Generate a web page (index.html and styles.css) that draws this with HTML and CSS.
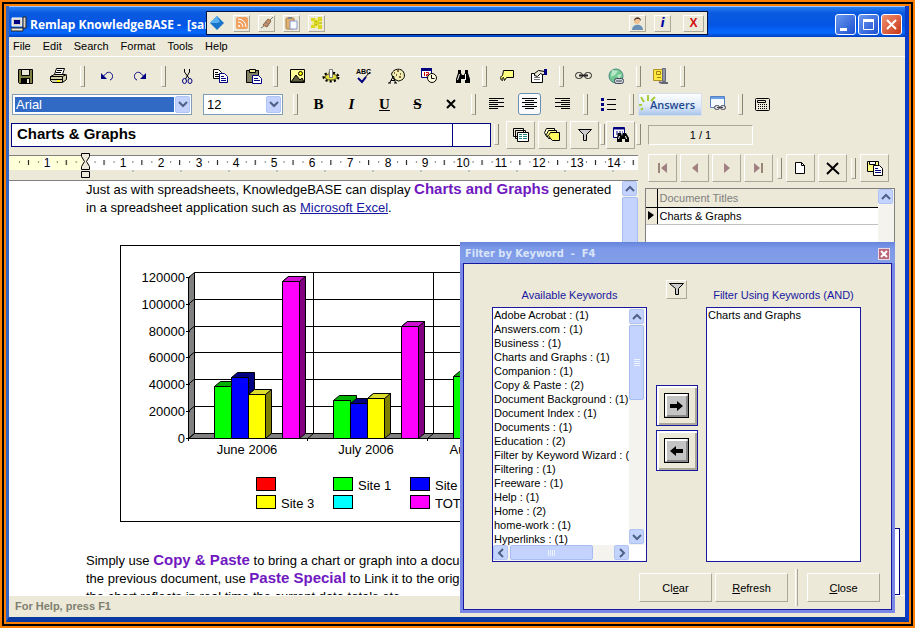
FILE: index.html
```html
<!DOCTYPE html>
<html lang="en">
<head>
    <meta charset="UTF-8">
    <meta name="viewport" content="width=device-width, initial-scale=1.0">
    <title>Remlap KnowledgeBASE</title>
    <link rel="stylesheet" href="styles.css">
</head>
<body>
  <div class="frame">
    <div class="window">

      <header class="titlebar">
        <svg class="app-icon" width="16" height="16" viewBox="0 0 16 16">
          <path d="M1 2h10v8H1z" fill="#d4d0c8" stroke="#fff"/><path d="M3 4h6v4H3z" fill="#000080"/>
          <path d="M12 1h3v11h-3z" fill="#d4d0c8" stroke="#222"/><path d="M0 12h12v3H0z" fill="#ece9d8" stroke="#222"/>
        </svg>
        <h1>Remlap KnowledgeBASE -&nbsp; [sample]</h1>
        <div class="window-buttons">
          <button type="button" aria-label="Minimize"><svg width="19" height="19"><path d="M4 13h7v3H4z" fill="#fff"/></svg></button>
          <button type="button" aria-label="Maximize"><svg width="19" height="19"><path d="M4.500 5.500h10v9h-10z" fill="none" stroke="#fff"/><path d="M4 4h11v3H4z" fill="#fff"/></svg></button>
          <button type="button" class="close" aria-label="Close window"><svg width="19" height="19"><path d="M5 5l9 9M14 5l-9 9" stroke="#fff" stroke-width="2"/></svg></button>
        </div>
      </header>

      <nav class="menu">
        <a href="#file">File</a>
        <a href="#edit">Edit</a>
        <a href="#search">Search</a>
        <a href="#format">Format</a>
        <a href="#tools">Tools</a>
        <a href="#help">Help</a>
      </nav>

      <!-- standard toolbar -->
      <div class="toolbar standard">
        <button type="button" aria-label="Save"><svg width="15" height="15"><path d="M.5 .5h14v14h-13l-1-1z" fill="#808040" stroke="#000"/><path d="M3.500 .5h8v6h-8z" fill="#ece9d8" stroke="#000"/><path d="M3 9h9v5H3z" fill="#000"/><path d="M9 10h2v4H9z" fill="#ece9d8"/></svg></button>
        <button type="button" aria-label="Print"><svg width="18" height="16"><path d="M4.500 6.500l2-6h8l-2 6z" fill="#fff" stroke="#000"/><path d="M7 2.500h5M6 4.500h5" stroke="#000"/><path d="M.5 8.500l4-2h11l1 1v4l-4 3h-10l-2-2z" fill="#d4d0a8" stroke="#000"/><path d="M.5 8.500h12l4-2M12.500 9v5M1 11.500h11" fill="none" stroke="#000"/><path d="M7 12h3v2H7z" fill="#ff0"/></svg></button>
        <span class="sep wide"></span>
        <button type="button" aria-label="Undo"><svg width="14" height="10"><path d="M3 5.500l3-3c3-3 7 0 6.500 3 0 2-1 3-2.500 3.500" fill="none" stroke="#000080"/><path d="M1 2v6h6z" fill="#000080"/></svg></button>
        <button type="button" aria-label="Redo"><svg width="14" height="10"><path d="M11 5.500l-3-3c-3-3-7 0-6.500 3 0 2 1 3 2.500 3.500" fill="none" stroke="#000080"/><path d="M13 2v6H7z" fill="#000080"/></svg></button>
        <span class="sep wide"></span>
        <button type="button" aria-label="Cut"><svg width="11" height="15"><path d="M2.500 0v3l5 7M7.500 0v3l-4 7" fill="none" stroke="#000"/><ellipse cx="2.500" cy="12" rx="2" ry="2.500" fill="none" stroke="#000080"/><ellipse cx="8" cy="12" rx="2" ry="2.500" fill="none" stroke="#000080"/></svg></button>
        <button type="button" aria-label="Copy"><svg width="16" height="14"><path d="M.5 .5h5l3 3v6h-8z" fill="#fff" stroke="#000"/><path d="M2 3.500h3M2 5.500h5M2 7.500h5" stroke="#000"/><path d="M6.500 4.500h5l3 3v6h-8z" fill="#fff" stroke="#000080"/><path d="M8 7.500h3M8 9.500h5M8 11.500h5" stroke="#000080"/></svg></button>
        <button type="button" aria-label="Paste"><svg width="16" height="15"><path d="M.5 1.500h12v12h-12z" fill="#808060" stroke="#000"/><path d="M3.500 .5h6v3h-6z" fill="#eeeb90" stroke="#000"/><path d="M6.500 6.500h6l3 3v5h-9z" fill="#fff" stroke="#000080"/><path d="M8 9.500h4M8 11.500h6" stroke="#000080"/></svg></button>
        <span class="sep"></span>
        <button type="button" aria-label="Picture"><svg width="15" height="14"><path d="M.5 .5h14v13H.5z" fill="#ff9" stroke="#000"/><circle cx="10.500" cy="4.500" r="2" fill="#ff0" stroke="#000"/><path d="M1 13l5-7 4 5 2-2 2 4z" fill="#606040" stroke="#000"/></svg></button>
        <button type="button" aria-label="Insert object"><svg width="18" height="16"><ellipse cx="9" cy="9" rx="7" ry="4" fill="#e6e23c" stroke="#000" stroke-width="3" stroke-dasharray="2 2"/><ellipse cx="9" cy="9" rx="6" ry="3" fill="#e6e23c" stroke="#554" /><path d="M7.500 1.500h3v8h-3z" fill="#fff" stroke="#777"/></svg></button>
        <button type="button" aria-label="Spelling"><svg width="18" height="16"><text x="1" y="6" class="abc">ABC</text><path d="M7 13l8-9" fill="none" stroke="#000"/><path d="M3 10l4 4 4-5" fill="none" stroke="#000080" stroke-width="2"/></svg></button>
        <button type="button" aria-label="Colours"><svg width="17" height="16"><path d="M3.500 6c2-6 10-6 12-2s1 8-5 9l-5-2z" fill="#f0eeb0" stroke="#000"/><path d="M6 5h1M9 3h2M12 6h1M11 9h2M8 7h1" stroke="#864" stroke-width="2"/><path d="M1.500 15l4-7 2 7M3 12.500h4M0 15h3M6 15h3" fill="none" stroke="#000"/></svg></button>
        <button type="button" aria-label="Date and time"><svg width="17" height="16"><path d="M.5 .5h10v9H.5z" fill="#fff" stroke="#000080"/><path d="M0 0h11v3H0z" fill="#000080"/><path d="M3.500 4v4M5 4.500h2.500v2H5.500v1.500H8" fill="none" stroke="#c00"/><circle cx="11" cy="10" r="4.500" fill="#ffd" stroke="#000"/><path d="M10.500 7v3.500h3" fill="none" stroke="#000"/></svg></button>
        <button type="button" aria-label="Find"><svg width="16" height="15"><path d="M3 1h3v3l1 2h2l1-2V1h3v3l2 6v4h-5v-4H6v4H1v-4l2-6z" fill="#000"/><path d="M4.500 5l-2 6M10.500 5v6" stroke="#fff"/></svg></button>
        <span class="sep"></span>
        <button type="button" aria-label="Comment"><svg width="14" height="12"><path d="M3.500 .5h10v7h-7l-2 3-1-3c-1 0-2 1-1 3-2 0-3-4 0-5z" fill="#ffff80" stroke="#000"/></svg></button>
        <button type="button" aria-label="Properties"><svg width="17" height="14"><path d="M.5 4.500h11v9H.5z" fill="#fff" stroke="#000"/><path d="M3 8.500h6M3 10.500h6" stroke="#777"/><path d="M3.500 4.500l4-3 6 1v3h-2l-2-1-3 3-3-1z" fill="#ece9d8" stroke="#000"/><path d="M13 0h3v6h-3z" fill="#000080"/></svg></button>
        <span class="sep"></span>
        <button type="button" aria-label="Hyperlink"><svg width="17" height="8"><rect x=".5" y=".5" width="7" height="6" rx="3" fill="none" stroke="#222"/><rect x="9.500" y=".5" width="7" height="6" rx="3" fill="none" stroke="#222"/><path d="M4 3.500h9" stroke="#222" stroke-width="2"/></svg></button>
        <button type="button" aria-label="Web link"><svg width="17" height="17"><circle cx="8" cy="8" r="7" fill="#70c890" stroke="#4a8a88"/><path d="M4 2l6 1-3 4-4 2zM9 7l5-1-3 5z" fill="#b8e8c8"/><rect x="6.500" y="10.500" width="9" height="5" rx="2" fill="#ccd4dc" stroke="#445"/><path d="M8 13h6" stroke="#445"/></svg></button>
        <span class="sep"></span>
        <button type="button" aria-label="Compress"><svg width="17" height="17"><path d="M1.500 1.500h10v11h-10z" fill="#ffe840" stroke="#b09020"/><path d="M4.500 3.500h4v3h-4zM5 9.500h4" fill="none" stroke="#a08010"/><path d="M10.500 .5h3v13h-3z" fill="#8f98a8" stroke="#667"/><path d="M7 14l3 1h6" fill="none" stroke="#667" stroke-width="2"/></svg></button>
        <span class="sep"></span>
      </div>

      <!-- formatting toolbar -->
      <div class="toolbar format">
        <label class="combo font"><select aria-label="Font"><option>Arial</option></select><span class="arrow"><svg width="10" height="8"><path d="M1 2l4 4 4-4" class="chev"/></svg></span></label>
        <label class="combo size"><select aria-label="Font size"><option>12</option></select><span class="arrow"><svg width="10" height="8"><path d="M1 2l4 4 4-4" class="chev"/></svg></span></label>
        <span class="sep mid"></span>
        <button type="button" class="glyph" aria-label="Bold">B</button>
        <button type="button" class="glyph" aria-label="Italic"><i>I</i></button>
        <button type="button" class="glyph" aria-label="Underline"><u>U</u></button>
        <button type="button" class="glyph" aria-label="Strikethrough"><s>S</s></button>
        <button type="button" aria-label="Clear formatting"><svg width="10" height="10"><path d="M1 1l8 8M9 1l-8 8" stroke="#000" stroke-width="2"/></svg></button>
        <span class="sep mid"></span>
        <button type="button" aria-label="Align left"><svg width="15" height="12"><path d="M0 .5h15M0 2.500h9M0 4.500h15M0 6.500h9M0 8.500h15M0 10.500h9" stroke="#000"/></svg></button>
        <button type="button" class="pressed" aria-label="Centre"><svg width="15" height="12"><path d="M0 .5h15M3 2.500h9M0 4.500h15M3 6.500h9M0 8.500h15M3 10.500h9" stroke="#000"/></svg></button>
        <button type="button" aria-label="Align right"><svg width="15" height="12"><path d="M0 .5h15M6 2.500h9M0 4.500h15M6 6.500h9M0 8.500h15M6 10.500h9" stroke="#000"/></svg></button>
        <span class="sep mid"></span>
        <button type="button" aria-label="Bullets"><svg width="15" height="13"><path d="M0 0h3v3H0zM0 5h3v3H0zM0 10h3v3H0z" fill="#000080"/><path d="M6 1.500h9M6 6.500h9M6 11.500h9" stroke="#000"/></svg></button>
        <span class="sep mid"></span>
        <button type="button" class="answers"><svg width="19" height="20"><path d="M9 7V1M5 8L2 3M3 11H0M12 7l4-4M4 14l-2 2" stroke="#a8cc38" stroke-width="2"/></svg><span>Answers</span></button>
        <button type="button" aria-label="Linked window"><svg width="17" height="16"><path d="M.5 .5h14v11H.5z" fill="#f4f8ff" stroke="#5580c0"/><path d="M1 1h13v2H1z" fill="#6aa0e8"/><rect x="4.500" y="9.500" width="5" height="4" rx="2" fill="#ddd" stroke="#445"/><rect x="10.500" y="9.500" width="5" height="4" rx="2" fill="#ddd" stroke="#445"/><path d="M7 11.500h6" stroke="#445"/></svg></button>
        <span class="sep"></span>
        <button type="button" aria-label="Calculator"><svg width="15" height="13"><rect x=".5" y=".5" width="14" height="12" rx="1" fill="#ece9d8" stroke="#000"/><path d="M2.500 2.500h8v2h-8z" fill="none" stroke="#000"/><path d="M3 6.500h10M3 8.500h10M3 10.500h10" stroke="#000" stroke-dasharray="1 1"/></svg></button>
      </div>

      <!-- document title and filters -->
      <div class="toolbar document">
        <div class="doc-title"><input type="text" aria-label="Document title" value="Charts &amp; Graphs"><input type="text" class="doc-code" aria-label="Document number"></div>
        <span class="sep"></span>
        <div class="flats">
          <button type="button" class="flat" aria-label="Copy documents"><svg width="16" height="14"><path d="M.5 .5h10v8H.5zM2.500 2.500h10v8h-10z" fill="#ece9d8" stroke="#000"/><path d="M4.500 4.500h11v9h-11z" fill="#fff" stroke="#000"/><path d="M6 6.500h3M6 8.500h3M6 10.500h3M10 6.500h4M10 8.500h4M10 10.500h4" stroke="#288"/></svg></button>
          <button type="button" class="flat" aria-label="Categories"><svg width="17" height="14"><path d="M2.500 .5h8v8h-8l-2-4z" fill="#ffffd0" stroke="#000"/><path d="M4.500 2.500h8v8h-8l-2-4z" fill="#ffff90" stroke="#000"/><path d="M6.500 4.500h9v8h-7l-2-2-2-3z" fill="#ffff60" stroke="#000"/></svg></button>
          <button type="button" class="flat" aria-label="Filter"><svg width="14" height="12"><path d="M.5 .5h13l-5 5v6h-3v-6z" fill="#ccc" stroke="#000"/></svg></button>
        </div>
        <span class="sep near"></span>
        <button type="button" class="flat" aria-label="Find in documents"><svg width="16" height="16"><path d="M.5 .5h11v10H.5z" fill="#fff" stroke="#000080"/><path d="M1 1.500h10" stroke="#000080" stroke-width="2"/><path d="M3 5h7M3 7h7" stroke="#000080" stroke-dasharray="2 1"/><path d="M5 6h3l1 3 1-3h3l3 5v4h-4v-3h-3v3H4v-4z" fill="#000"/><path d="M6.500 9l-1 3M12.500 9l1 3" stroke="#fff"/></svg></button>
        <span class="sep near"></span>
        <output class="counter">1 / 1</output>
      </div>

      <main class="main">
        <section class="left">
          <div class="ruler">
            <svg width="1600" height="26">
              <defs>
                <pattern id="ticks" x="1" y="0" width="37.8" height="16" patternUnits="userSpaceOnUse">
                  <path d="M9 9h1M28 9h1M18.500 7v5" stroke="#000"/>
                </pattern>
              </defs>
              <path d="M0 2h76v15H0z" fill="#ffffd8"/><path d="M76 2h1600v15H76z" fill="#fff"/>
              <path d="M0 2.500h1600" stroke="#808080"/>
              <path d="M0 2h1600v15H0z" fill="url(#ticks)"/>
              <path d="M124 17v2M172 17v2M220 17v2M268 17v2M316 17v2M364 17v2M412 17v2M460 17v2M508 17v2M556 17v2M604 17v2" stroke="#999"/>
              <g class="numbers">
                <text x="38" y="14">1</text><text x="114" y="14">1</text><text x="152" y="14">2</text><text x="190" y="14">3</text><text x="227" y="14">4</text><text x="265" y="14">5</text><text x="303" y="14">6</text><text x="341" y="14">7</text><text x="379" y="14">8</text><text x="416" y="14">9</text><text x="454" y="14">10</text><text x="492" y="14">11</text><text x="530" y="14">12</text><text x="568" y="14">13</text><text x="605" y="14">14</text>
              </g>
              <path d="M72.500 .5h8v3l-3 5 3 5v3h-8v-3l3-5-3-5zM72.500 18.500h8v6h-8z" fill="#ece9d8" stroke="#000"/>
            </svg>
          </div>
          <div class="editor">
            <article class="page">
              <p>Just as with spreadsheets, KnowledgeBASE can display <b>Charts and Graphs</b> generated<br>in a spreadsheet application such as <a href="#excel">Microsoft Excel</a>.</p>
              <svg class="chart" width="488" height="277" viewBox="120 245 488 277">
                <rect x="120.500" y="245.500" width="487" height="276" fill="#fff" stroke="#000"/>
                <!-- back wall -->
                <path d="M194.500 272.500H560M194.500 299.500H560M194.500 326.500H560M194.500 352.500H560M194.500 379.500H560M194.500 406.500H560M313.500 272V433M433.500 272V433" fill="none" stroke="#000"/>
                <!-- side wall and floor -->
                <path d="M188.500 277.500l6-5v161l-6 5zM188.500 438.500l6-5H560l-6 5z" fill="#808080" stroke="#000"/>
                <path d="M188 304.500l6-5M188 331.500l6-5M188 357.500l6-5M188 384.500l6-5M188 411.500l6-5M307.500 438.500l6-5M427.500 438.500l6-5" stroke="#000"/>
                <path d="M186 277.500h4M186 304.500h4M186 331.500h4M186 357.500h4M186 384.500h4M186 411.500h4M186 438.500h4M188.500 438v3M307.500 438v3M427.500 438v3" stroke="#000"/>
                <g class="axis-y">
                  <text x="185" y="282">120000</text><text x="185" y="309">100000</text><text x="185" y="336">80000</text><text x="185" y="362">60000</text><text x="185" y="389">40000</text><text x="185" y="416">20000</text><text x="185" y="443">0</text>
                </g>
                <g stroke="#000">
                  <path d="M214.500 386.500l6-5h17v52l-6 5h-17z" fill="#00b000"/><path d="M214.500 386.500h17v52h-17z" fill="#0f0"/>
                  <path d="M231.500 377.500l6-5h17v61l-6 5h-17z" fill="#000080"/><path d="M231.500 377.500h17v61h-17z" fill="#00f"/>
                  <path d="M248.500 394.500l6-5h17v44l-6 5z" fill="#808000"/><path d="M248.500 394.500l6-5h17l-6 5z" fill="#dcdc30"/><path d="M248.500 394.500h17v44h-17z" fill="#ff0"/>
                  <path d="M282.500 281.500l6-5h17v157l-6 5z" fill="#800080"/><path d="M282.500 281.500l6-5h17l-6 5z" fill="#d010d0"/><path d="M282.500 281.500h17v157h-17z" fill="#f0f"/>
                  <path d="M333.500 400.500l6-5h17v38l-6 5z" fill="#00b000"/><path d="M333.500 400.500h17v38h-17z" fill="#0f0"/>
                  <path d="M350.500 403.500l6-5h17v35l-6 5z" fill="#000080"/><path d="M350.500 403.500h17v35h-17z" fill="#00f"/>
                  <path d="M367.500 398.500l6-5h17v40l-6 5z" fill="#808000"/><path d="M367.500 398.500l6-5h17l-6 5z" fill="#dcdc30"/><path d="M367.500 398.500h17v40h-17z" fill="#ff0"/>
                  <path d="M401.500 326.500l6-5h17v112l-6 5z" fill="#800080"/><path d="M401.500 326.500l6-5h17l-6 5z" fill="#d010d0"/><path d="M401.500 326.500h17v112h-17z" fill="#f0f"/>
                  <path d="M453.500 376.500l6-5h17v62l-6 5z" fill="#00b000"/><path d="M453.500 376.500h17v62h-17z" fill="#0f0"/>
                </g>
                <g class="axis-x">
                  <text x="247" y="454">June 2006</text><text x="366" y="454">July 2006</text><text x="486" y="454">August 2006</text>
                </g>
                <g stroke="#000">
                  <rect x="256.500" y="477.500" width="19" height="13" fill="#f00"/><rect x="333.500" y="477.500" width="19" height="13" fill="#0f0"/><rect x="410.500" y="477.500" width="19" height="13" fill="#00f"/>
                  <rect x="256.500" y="495.500" width="19" height="13" fill="#ff0"/><rect x="333.500" y="495.500" width="19" height="13" fill="#0ff"/><rect x="410.500" y="495.500" width="19" height="13" fill="#f0f"/>
                </g>
                <g class="legend">
                  <text x="358" y="490">Site 1</text><text x="435" y="490">Site 2</text><text x="281" y="508">Site 3</text><text x="435" y="508">TOTAL</text>
                </g>
              </svg>
              <p>Simply use <b>Copy &amp; Paste</b> to bring a chart or graph into a document. In<br>the previous document, use <b>Paste Special</b> to Link it to the original so<br>the chart reflects in real time the current data totals etc.</p>
            </article>
            <div class="scroll-v" aria-hidden="true"><span class="btn"><svg width="10" height="8"><path d="M1 6l4-4 4 4" class="chev"/></svg></span><span class="thumb"></span></div>
          </div>
        </section>

        <aside class="side">
          <div class="record-bar">
            <button type="button" class="flat" aria-label="First"><svg width="9" height="10"><path d="M1 0v10" stroke="#987" stroke-width="2"/><path d="M9 0v10L3 5z" fill="#a08080"/></svg></button>
            <button type="button" class="flat" aria-label="Previous"><svg width="6" height="10"><path d="M6 0v10L0 5z" fill="#a08080"/></svg></button>
            <button type="button" class="flat" aria-label="Next"><svg width="6" height="10"><path d="M0 0v10l6-5z" fill="#a08080"/></svg></button>
            <button type="button" class="flat" aria-label="Last"><svg width="9" height="10"><path d="M8 0v10" stroke="#987" stroke-width="2"/><path d="M0 0v10l6-5z" fill="#a08080"/></svg></button>
            <span class="sep near"></span>
            <button type="button" class="flat" aria-label="New document"><svg width="11" height="13"><path d="M.5 .5h6l3 3v8h-9z" fill="#fff" stroke="#000"/><path d="M6.500 .5v3h3" fill="none" stroke="#000"/></svg></button>
            <button type="button" class="flat" aria-label="Delete document"><svg width="14" height="13"><path d="M1 1l12 11M12 1L1 12" stroke="#000" stroke-width="2"/></svg></button>
            <span class="sep near"></span>
            <button type="button" class="flat" aria-label="Save copy"><svg width="16" height="15"><path d="M.5 .5h11v10H.5z" fill="#ffff80" stroke="#000"/><path d="M2.500 .5h6v3h-6z" fill="#fff" stroke="#000"/><path d="M6.500 4.500h6l3 3v7h-9z" fill="#fff" stroke="#000"/><path d="M8 7.500h3M8 9.500h6M8 11.500h6" stroke="#000080"/></svg></button>
          </div>
          <div class="titles">
            <table>
              <thead><tr><th class="mark"></th><th>Document Titles</th></tr></thead>
              <tbody><tr><td class="mark"><svg width="6" height="9"><path d="M0 0l6 4-6 5z"/></svg></td><td>Charts &amp; Graphs</td></tr></tbody>
            </table>
            <div class="scroll-v" aria-hidden="true"><span class="btn"><svg width="10" height="8"><path d="M1 6l4-4 4 4" class="chev"/></svg></span></div>
          </div>
          <div class="keywords"></div>
        </aside>
      </main>

      <footer class="status">For Help, press F1</footer>
    </div>
  </div>

  <!-- companion bar docked over the title bar -->
  <div class="companion">
    <svg width="16" height="14"><path d="M8 0l7 7-7 7-7-7z" fill="#1874c8"/><path d="M8 0l3 6-3 1-7 0z" fill="#58b0f0"/></svg>
    <button type="button" aria-label="Feeds"><svg width="12" height="12"><rect width="12" height="12" rx="2" fill="#f0a060"/><path d="M2 5a5 5 0 0 1 5 5M2 2a8 8 0 0 1 8 8" fill="none" stroke="#fff"/><circle cx="3" cy="9" r="1" fill="#fff"/></svg></button>
    <button type="button" aria-label="Connect"><svg width="12" height="12"><path d="M2 8l5-6 3 2-4 6z" fill="#c89068" stroke="#864"/><path d="M0 11l3-2M9 3l3-3M4 5l4 3" stroke="#777"/></svg></button>
    <button type="button" aria-label="Clipboard"><svg width="13" height="13"><rect x="1" y="1" width="8" height="11" rx="1" fill="#e0b070" stroke="#b08040"/><path d="M3 0h4v2H3z" fill="#888"/><path d="M5 4h7v8H5z" fill="#f8fbff" stroke="#89c"/></svg></button>
    <button type="button" aria-label="Expand"><svg width="12" height="12"><path d="M1 1h10v10H1z" fill="#f0ee80"/><path d="M0 1h4v3H0zM7 0h4v4H7zM3 4h5v4H3zM0 8h4v3H0zM7 8h4v4H7z" fill="#dcd820"/><path d="M5 3v2M5 7v2M8 6h3" stroke="#a8a000"/></svg></button>
    <span class="space"></span>
    <button type="button" aria-label="User"><svg width="13" height="13"><path d="M1 13c0-7 11-7 11 0z" fill="#6a90b8"/><circle cx="6" cy="4" r="3" fill="#f0c090"/><path d="M3 4c0-5 7-5 7 0L8 2H5z" fill="#533"/></svg></button>
    <button type="button" class="info" aria-label="Info">i</button>
    <button type="button" class="exit" aria-label="Exit">X</button>
  </div>

  <!-- keyword filter dialog -->
  <form class="dialog">
    <header>
      <h2>Filter by Keyword&nbsp; -&nbsp; F4</h2>
      <button type="button" aria-label="Close dialog"><svg width="8" height="8"><path d="M1 1l6 6M7 1L1 7" stroke="#fff" stroke-width="2"/></svg></button>
    </header>
    <div class="dialog-body">
      <div class="lists">
        <div class="column">
          <label for="available">Available Keywords</label>
          <div class="listbox">
            <select id="available" multiple>
              <option>Adobe Acrobat : (1)</option>
              <option>Answers.com : (1)</option>
              <option>Business : (1)</option>
              <option>Charts and Graphs : (1)</option>
              <option>Companion : (1)</option>
              <option>Copy &amp; Paste : (2)</option>
              <option>Document Background : (1)</option>
              <option>Document Index : (1)</option>
              <option>Documents : (1)</option>
              <option>Education : (2)</option>
              <option>Filter by Keyword Wizard : (1)</option>
              <option>Filtering : (1)</option>
              <option>Freeware : (1)</option>
              <option>Help : (1)</option>
              <option>Home : (2)</option>
              <option>home-work : (1)</option>
              <option>Hyperlinks : (1)</option>
            </select>
            <div class="scroll-v" aria-hidden="true"><span class="btn"><svg width="10" height="8"><path d="M1 6l4-4 4 4" class="chev"/></svg></span><span class="thumb"><svg width="6" height="8"><path d="M0 .5h6M0 2.500h6M0 4.500h6M0 6.500h6" stroke="#eef4ff"/></svg></span><span class="btn end"><svg width="10" height="8"><path d="M1 2l4 4 4-4" class="chev"/></svg></span></div>
            <div class="scroll-h" aria-hidden="true"><span class="btn"><svg width="8" height="10"><path d="M6 1L2 5l4 4" class="chev"/></svg></span><span class="thumb"><svg width="8" height="6"><path d="M.5 0v6M2.500 0v6M4.500 0v6M6.500 0v6" stroke="#eef4ff"/></svg></span><span class="btn end"><svg width="8" height="10"><path d="M2 1l4 4-4 4" class="chev"/></svg></span></div>
          </div>
        </div>
        <div class="movers">
          <button type="button" class="filter" aria-label="Filter"><svg width="15" height="13"><path d="M.5 .5h14l-5 5v6h-3v-6z" fill="#ccc" stroke="#000"/></svg></button>
          <button type="button" class="move" aria-label="Add keyword"><svg width="25" height="25"><rect x=".5" y=".5" width="24" height="24" fill="#c4c4c4" stroke="#000"/><path d="M2 23V2h21" fill="none" stroke="#fff" stroke-width="2"/><path d="M3 23h20V3" fill="none" stroke="#888" stroke-width="2"/><path d="M6 11h7V8l6 5-6 5v-3H6z"/></svg></button>
          <button type="button" class="move" aria-label="Remove keyword"><svg width="25" height="25"><rect x=".5" y=".5" width="24" height="24" fill="#c4c4c4" stroke="#000"/><path d="M2 23V2h21" fill="none" stroke="#fff" stroke-width="2"/><path d="M3 23h20V3" fill="none" stroke="#888" stroke-width="2"/><path d="M19 11h-7V8l-6 5 6 5v-3h7z"/></svg></button>
        </div>
        <div class="column">
          <label for="using">Filter Using Keywords (AND)</label>
          <div class="listbox">
            <select id="using" class="full" multiple>
              <option>Charts and Graphs</option>
            </select>
          </div>
        </div>
      </div>
      <div class="actions">
        <button type="button">Cl<u>e</u>ar</button>
        <button type="button"><u>R</u>efresh</button>
        <span class="divider"></span>
        <button type="button"><u>C</u>lose</button>
      </div>
    </div>
  </form>
</body>
</html>
```
FILE: styles.css
```css
* {
  box-sizing: border-box;
}
body {
  margin: 0;
  height: 100vh;
  padding: 2px;
  overflow: hidden;
  background: #ff8000;
  font: 11px "Liberation Sans", Arial, sans-serif;
  color: #000;
}
button, input, select {
  font: inherit;
  color: inherit;
  margin: 0;
  padding: 0;
  border: 0;
  border-radius: 0;
  background: none;
  outline: none;
}
svg {
  display: block;
  flex: none;
}
.frame {
  height: 100%;
  border: 2px solid #000;
  padding: 2px;
}
.window {
  height: 100%;
  display: flex;
  flex-direction: column;
  border: solid;
  border-width: 0 4px 5px 3px;
  border-color: #0a3cc8 #0a3cc8 #0a3aa0 #3464c4;
  background: #ece9d8;
}

/* title bar */
.titlebar {
  flex: none;
  height: 31px;
  display: flex;
  align-items: center;
  padding: 4px 3px 0 2px;
  border-top: 1px solid #a8c4f0;
  background: linear-gradient(#2a80f0, #0a5ae0 20%, #0455e4 60%, #0668ff 85%, #0040c0);
}
.titlebar h1 {
  flex: 1;
  margin: 0 0 0 3px;
  font: bold 12px "Open Sans", sans-serif;
  color: #fff;
  white-space: nowrap;
}
.window-buttons {
  display: flex;
  gap: 2px;
}
.window-buttons button {
  width: 21px;
  height: 21px;
  border: 1px solid #fff;
  border-radius: 3px;
  background: linear-gradient(135deg, #6a98f0, #1c50d0);
}
.window-buttons .close {
  background: linear-gradient(135deg, #f09070, #c83818);
}

.menu {
  flex: none;
  height: 20px;
  display: flex;
  align-items: center;
  gap: 12px;
  padding: 0 0 2px 4px;
  border-bottom: 1px solid #fff;
}
.menu a {
  color: #000;
  text-decoration: none;
}

/* toolbars */
.toolbar {
  flex: none;
  display: flex;
  align-items: center;
}
.toolbar > button {
  flex: none;
  width: 33px;
  height: 22px;
  display: grid;
  place-items: center;
}
.standard {
  height: 35px;
  padding-top: 3px;
}
.format {
  height: 24px;
  padding-left: 3px;
}
.document {
  height: 33px;
  padding: 4px 0 0 2px;
}
.sep {
  flex: none;
  width: 11px;
  height: 21px;
  display: flex;
  justify-content: center;
}
.sep::before {
  content: "";
  width: 3px;
  border: solid;
  border-width: 0 1px 1px;
  border-color: #fff #8a8778 #aca899 #fff;
}
.sep.wide {
  width: 15px;
}
.sep.mid {
  width: 13px;
}
.sep.near {
  width: 7px;
}
.abc {
  font: bold 7px "Liberation Sans", sans-serif;
}
.chev {
  fill: none;
  stroke: #4d6185;
  stroke-width: 2;
}
.combo {
  flex: none;
  height: 21px;
  display: flex;
  padding: 1px;
  border: 1px solid #7f9db9;
  background: #fff;
}
.combo.font {
  width: 180px;
  margin-right: 11px;
}
.combo.size {
  width: 80px;
  margin-right: 6px;
}
.combo select {
  flex: 1;
  appearance: none;
  margin: 1px;
  padding-left: 1px;
  font-size: 13px;
}
.combo.font select {
  background: #316ac5;
  color: #fff;
}
.arrow, .scroll-v .btn, .scroll-h .btn {
  flex: none;
  width: 15px;
  height: 15px;
  display: grid;
  place-items: center;
  border-radius: 2px;
  background: #c3d3fd;
  border: 1px solid #b0c4f4;
}
.arrow {
  height: 17px;
}
.toolbar .glyph {
  font: bold 15px "Liberation Serif", serif;
}
.toolbar > .pressed {
  width: 23px;
  margin: 0 5px;
  border: 1px solid #6a90b0;
  border-radius: 3px;
  background: #f8fafc;
}
.toolbar > .answers {
  width: 64px;
  height: 23px;
  display: flex;
  align-items: center;
  background: linear-gradient(#fdfefe, #dce8f8 60%, #a8c4ec);
  border: 1px solid #d8e0ec;
  font: 600 11px "Open Sans", sans-serif;
  color: #1c4a90;
}
.answers svg {
  margin-right: -8px;
}

.doc-title {
  flex: none;
  width: 480px;
  height: 24px;
  display: flex;
  border: 1px solid #000080;
  background: #fff;
}
.doc-title input {
  flex: 1;
  min-width: 0;
  padding: 0 0 3px 5px;
  font-size: 15px;
  font-weight: bold;
}
.doc-title .doc-code {
  flex: 0 0 38px;
  border-left: 1px solid #000080;
}
.flats {
  display: flex;
  gap: 3px;
  margin-left: 4px;
}
.flat, .toolbar > .flat {
  flex: none;
  width: 29px;
  height: 28px;
  display: grid;
  place-items: center;
  border: 1px solid;
  border-color: #fff #aca899 #aca899 #fff;
}
.counter {
  width: 105px;
  height: 20px;
  margin-left: 6px;
  line-height: 18px;
  text-align: center;
  border: 1px solid;
  border-color: #aca899 #fff #fff #aca899;
}

/* editor and document list */
.main {
  flex: 1;
  min-height: 0;
  display: grid;
  grid-template-columns: minmax(0, 1fr) 262px;
  gap: 5px;
}
.left, .side {
  min-height: 0;
  display: flex;
  flex-direction: column;
  padding-top: 4px;
}
.ruler {
  flex: none;
  height: 27px;
  overflow: hidden;
}
.numbers {
  font-size: 12px;
  text-anchor: middle;
  paint-order: stroke;
  stroke: #fff;
  stroke-width: 3px;
}
.editor {
  flex: 1;
  min-height: 0;
  display: flex;
  border-top: 1px solid #808080;
  background: #fff;
}
.page {
  flex: 1;
  min-width: 0;
  padding-left: 77px;
  overflow: hidden;
  font-size: 13px;
  line-height: 18px;
  white-space: nowrap;
}
.page p {
  margin: 0;
}
.page b {
  font-size: 15px;
  line-height: 16px;
  color: #7018c0;
}
.page a {
  color: #1818a0;
}
.chart {
  margin: 28px 0 30px 34px;
}
.chart text {
  font-size: 13px;
}
.axis-y {
  text-anchor: end;
}
.axis-x {
  text-anchor: middle;
}
.scroll-v {
  flex: none;
  width: 16px;
  display: flex;
  flex-direction: column;
  gap: 1px;
  background: #f4f3ee;
}
.scroll-v .thumb, .scroll-h .thumb {
  display: grid;
  place-items: center;
  border-radius: 2px;
  background: #c3d3fd;
  border: 1px solid #a8bcf0;
}
.editor .thumb {
  height: 180px;
}
.record-bar {
  flex: none;
  display: flex;
  align-items: center;
  gap: 3px;
  padding: 1px 0 0 5px;
}
.titles {
  height: 290px;
  margin: 6px 10px 0 2px;
  display: flex;
  border: 1px solid #808080;
  background: #fff;
}
.titles table {
  flex: 1;
  align-self: flex-start;
  border-collapse: collapse;
}
.titles th, .titles td {
  height: 17px;
  padding: 0 2px;
  text-align: left;
  border-bottom: 1px solid #c0c0c0;
}
.titles th {
  height: 18px;
  font-weight: normal;
  color: #808080;
  background: #ece9d8;
  border-bottom: 1px solid #000;
}
.titles .mark {
  width: 11px;
  border-right: 1px solid #000;
  background: #ece9d8;
}
.keywords {
  height: 67px;
  margin: 50px 5px 0 2px;
  border: 1px solid #000080;
  background: #fff;
}
.status {
  flex: none;
  height: 22px;
  padding-left: 6px;
  line-height: 20px;
  font-weight: bold;
  color: #808070;
  border-top: 1px solid #fff;
}

/* floating companion bar */
.companion {
  position: absolute;
  top: 11px;
  left: 206px;
  width: 502px;
  height: 24px;
  display: flex;
  align-items: center;
  gap: 8px;
  padding: 0 3px 0 2px;
  border: 1px solid #001040;
  background: #ece9d8;
}
.companion button {
  width: 17px;
  height: 17px;
  display: grid;
  place-items: center;
  border: 1px solid;
  border-color: #fff #aca899 #aca899 #fff;
}
.companion .space {
  flex: 1;
}
.companion .info {
  margin-right: 4px;
  font: italic bold 12px "DejaVu Sans", sans-serif;
  color: #0000a0;
}
.companion .exit {
  width: 21px;
  font-size: 12px;
  font-weight: bold;
  color: #d01010;
}

/* filter dialog */
.dialog {
  position: absolute;
  top: 242px;
  left: 460px;
  width: 435px;
  padding: 0 3px 3px;
  background: #7888e4;
}
.dialog header {
  height: 21px;
  display: flex;
  align-items: center;
  justify-content: space-between;
  margin: 0 -3px;
  padding: 2px 5px 0;
  background: linear-gradient(#6484dc, #7c98e8 30%, #84a0e8);
}
.dialog h2 {
  margin: 0;
  font: bold 11px "DejaVu Sans Condensed", "DejaVu Sans", sans-serif;
  color: #d8e4f8;
}
.dialog header button {
  width: 12px;
  height: 12px;
  display: grid;
  place-items: center;
  border: 1px solid #e8d8e8;
  background: #b86878;
}
.dialog-body {
  padding: 16px 11px 3px 28px;
  border: 1px solid #1818a0;
  background: #ece9d8;
}
.lists {
  display: flex;
  gap: 8px;
}
.column {
  width: 155px;
}
.column label {
  display: block;
  padding-top: 9px;
  height: 27px;
  text-align: center;
  color: #1818a0;
}
.listbox {
  height: 255px;
  display: grid;
  grid-template: minmax(0, 1fr) 16px / minmax(0, 1fr) 17px;
  border: 1px solid #1818a0;
  background: #fff;
}
.listbox select {
  height: 100%;
  width: 100%;
  overflow: hidden;
}
.listbox .full {
  grid-area: 1 / 1 / 3 / 3;
}
.listbox option {
  min-height: 14px;
  height: 14px;
  padding: 1px 0 0 1px;
  line-height: 13px;
}
.listbox .scroll-v {
  padding: 1px 1px 1px 0;
}
.listbox .scroll-v .thumb {
  height: 75px;
}
.btn.end {
  margin-top: auto;
}
.scroll-h {
  display: flex;
  gap: 2px;
  background: #f4f3ee;
}
.scroll-h .thumb {
  width: 83px;
  height: 15px;
}
.scroll-h .btn.end {
  margin: 0 0 0 auto;
}
.movers {
  width: 43px;
  display: flex;
  flex-direction: column;
  align-items: center;
  gap: 4px;
}
.filter {
  width: 21px;
  height: 19px;
  margin-bottom: 82px;
  display: grid;
  place-items: center;
  border: 1px solid;
  border-color: #fff #aca899 #aca899 #fff;
}
.move {
  width: 42px;
  height: 41px;
  display: grid;
  place-items: center;
  border: 1px solid #1818a0;
  box-shadow: inset 2px 2px #fff, inset -2px -2px #aca899;
}
.actions {
  display: flex;
  justify-content: flex-end;
  align-items: center;
  gap: 3px;
  margin-top: 7px;
}
.actions button {
  width: 73px;
  height: 29px;
  border: 1px solid;
  border-color: #fff #aca899 #aca899 #fff;
}
.divider {
  width: 3px;
  height: 37px;
  margin: 0 6px 0 4px;
  border: solid;
  border-width: 0 1px;
  border-color: #fff #aca899 #aca899 #fff;
}
```
